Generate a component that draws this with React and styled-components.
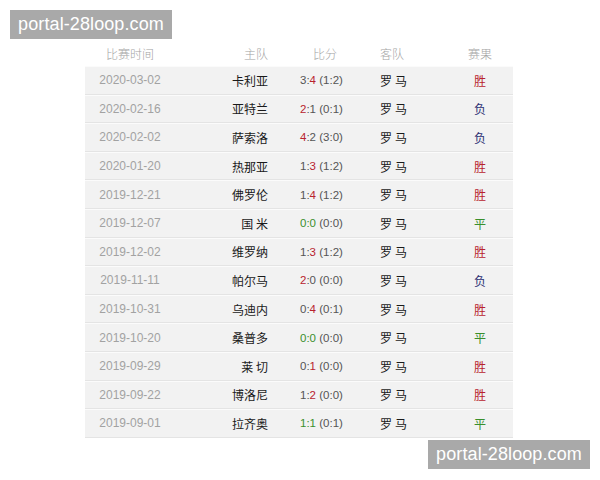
import React from "react";
import styled, { createGlobalStyle } from "styled-components";

const Global = createGlobalStyle`
  html, body { margin: 0; padding: 0; background: #fff; }
  body { font-family: "Liberation Sans", Arial, "Noto Sans CJK SC", sans-serif; }
`;

const Page = styled.div`
  position: relative;
  width: 600px;
  height: 480px;
  overflow: hidden;
  background: #fff;
  padding: 40px 0 0 85px;
  box-sizing: border-box;
`;

const Table = styled.div`
  width: 428px;
  display: flex;
  flex-direction: column;
`;

const cols = "90px 93px 112px 67px 66px";

const HeadRow = styled.div`
  display: grid;
  grid-template-columns: ${cols};
  height: 26px;
  align-items: center;
  font-size: 12px;
  color: #a3a3a3;
  font-family: "Noto Sans CJK SC", sans-serif;
  font-weight: 300;
`;

const Head = styled.div`
  text-align: ${(p) => p.$align || "center"};
  padding-left: ${(p) => p.$pl || 0}px;
`;

const Row = styled.div`
  display: grid;
  grid-template-columns: ${cols};
  height: 28.6px;
  box-sizing: border-box;
  align-items: center;
  background: #f2f2f2;
  border-top: 1px solid #fbfbfb;
  border-bottom: 1px solid #e4e4e4;
`;

const DateCell = styled.div`
  text-align: center;
  font-size: 12px;
  color: #a2a2a2;
`;

const Team = styled.div`
  text-align: ${(p) => (p.$home ? "right" : "left")};
  font-size: 12px;
  color: #1a1a1a;
  font-family: "Noto Sans CJK SC", sans-serif;
  letter-spacing: ${(p) => (p.$home ? "0" : "3px")};
`;

const Score = styled.div`
  padding-left: 32px;
  font-size: 11.5px;
  color: #555;
`;

const Goal = styled.span`
  color: ${(p) => p.$c || "inherit"};
`;

const Result = styled.div`
  text-align: center;
  font-size: 12px;
  font-family: "Noto Sans CJK SC", sans-serif;
  color: ${(p) => p.$c};
`;

const Mark = styled.div`
  position: absolute;
  left: ${(p) => p.$x}px;
  top: ${(p) => p.$y}px;
  width: 162px;
  height: 29px;
  background: #a9a9a9;
  color: #fff;
  font-size: 18px;
  line-height: 29px;
  text-align: center;
  font-family: "Liberation Sans", Arial, sans-serif;
  letter-spacing: 0.1px;
`;

const RED = "#b8222e";
const GREEN = "#3a8f2c";
const NAVY = "#2c2f72";

const data = [
  ["2020-03-02", "卡利亚", 3, 4, "1:2", "胜"],
  ["2020-02-16", "亚特兰", 2, 1, "0:1", "负"],
  ["2020-02-02", "萨索洛", 4, 2, "3:0", "负"],
  ["2020-01-20", "热那亚", 1, 3, "1:2", "胜"],
  ["2019-12-21", "佛罗伦", 1, 4, "1:2", "胜"],
  ["2019-12-07", "国 米", 0, 0, "0:0", "平"],
  ["2019-12-02", "维罗纳", 1, 3, "1:2", "胜"],
  ["2019-11-11", "帕尔马", 2, 0, "0:0", "负"],
  ["2019-10-31", "乌迪内", 0, 4, "0:1", "胜"],
  ["2019-10-20", "桑普多", 0, 0, "0:0", "平"],
  ["2019-09-29", "莱 切", 0, 1, "0:0", "胜"],
  ["2019-09-22", "博洛尼", 1, 2, "0:0", "胜"],
  ["2019-09-01", "拉齐奥", 1, 1, "0:1", "平"],
];

const resColor = { 胜: RED, 负: NAVY, 平: GREEN };

export default function App() {
  return (
    <>
      <Global />
      <Page>
        <Table>
          <HeadRow>
            <Head>比赛时间</Head>
            <Head $align="right">主队</Head>
            <Head $align="left" $pl={45}>比分</Head>
            <Head $align="left">客队</Head>
            <Head>赛果</Head>
          </HeadRow>
          {data.map(([d, home, h, a, ht, r]) => {
            const draw = h === a;
            const hc = draw ? GREEN : h > a ? RED : undefined;
            const ac = draw ? GREEN : a > h ? RED : undefined;
            return (
              <Row key={d}>
                <DateCell>{d}</DateCell>
                <Team $home>{home}</Team>
                <Score>
                  <Goal $c={hc}>{h}</Goal>
                  <Goal $c={draw ? GREEN : undefined}>:</Goal>
                  <Goal $c={ac}>{a}</Goal> ({ht})
                </Score>
                <Team>罗马</Team>
                <Result $c={resColor[r]}>{r}</Result>
              </Row>
            );
          })}
        </Table>
        <Mark $x={10} $y={10}>portal-28loop.com</Mark>
        <Mark $x={428} $y={440}>portal-28loop.com</Mark>
      </Page>
    </>
  );
}
